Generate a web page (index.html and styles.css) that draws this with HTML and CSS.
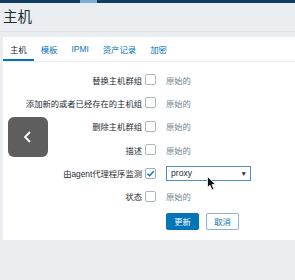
FILE: index.html
```html
<!DOCTYPE html>
<html lang="zh">
<head>
  <meta charset="UTF-8" />
  <title>主机</title>
<link rel="stylesheet" href="styles.css">
</head>
<body>

<div class="topbar"><span class="topbar-mark"></span></div>

<div class="page-title">
  <h1>主机</h1>
</div>

<div class="card">
  <ul class="tabs">
    <li class="active">主机</li>
    <li>模板</li>
    <li>IPMI</li>
    <li>资产记录</li>
    <li>加密</li>
  </ul>

  <div class="form">
    <div class="row">
      <label>替换主机群组</label>
      <span class="check"></span>
      <span class="value">原始的</span>
    </div>
    <div class="row">
      <label>添加新的或者已经存在的主机组</label>
      <span class="check"></span>
      <span class="value">原始的</span>
    </div>
    <div class="row">
      <label>删除主机群组</label>
      <span class="check"></span>
      <span class="value">原始的</span>
    </div>
    <div class="row">
      <label>描述</label>
      <span class="check"></span>
      <span class="value">原始的</span>
    </div>
    <div class="row">
      <label>由agent代理程序监测</label>
      <span class="check checked">
        <svg viewBox="0 0 10 10" width="9" height="9"><path d="M1.5 5.2 L4 7.5 L8.6 2.6" fill="none" stroke="#1f6fb8" stroke-width="1.6"/></svg>
      </span>
      <div class="select">
        <span>proxy</span>
        <span class="arrow">▼</span>
      </div>
    </div>
    <div class="row">
      <label>状态</label>
      <span class="check"></span>
      <span class="value">原始的</span>
    </div>
    <div class="buttons">
      <button class="btn primary">更新</button>
      <button class="btn">取消</button>
    </div>
  </div>
</div>

<div class="back-btn">
  <svg viewBox="0 0 16 16" width="16" height="16"><path d="M10 3 L5 8 L10 13" fill="none" stroke="#fff" stroke-width="1.8"/></svg>
</div>

<svg class="cursor" viewBox="0 0 10 15" width="10" height="15">
  <path d="M0.5 0.5 L0.5 11.5 L3 9.3 L5 14 L7 13.2 L5 8.6 L8.5 8.6 Z" fill="#111" stroke="#fff" stroke-width="0.8"/>
</svg>

</body>
</html>
```

FILE: styles.css
```css
body {
  margin: 0;
  background: #ebeef0;
  font-family: "Liberation Sans", "Noto Sans CJK SC", sans-serif;
  color: #1f2c33;
  position: relative;
  height: 280px;
  overflow: hidden;
}

.topbar {
  height: 3px;
  background: #0d3d63;
  position: relative;
}

.topbar-mark {
  position: absolute;
  left: 80px;
  top: 0;
  width: 17px;
  height: 3px;
  background: #78acd9;
}

.page-title {
  padding: 0 3px;
  height: 28px;
  border-bottom: 1px solid #dde2e5;
  display: flex;
  align-items: center;
}

.page-title h1 {
  margin: 0;
  font-size: 14.5px;
  font-weight: normal;
  color: #1f2c33;
  line-height: 1;
  padding-top: 1px;
}

.card {
  margin: 5px 0 0 3px;
  background: #fff;
  height: 203px;
}

.tabs {
  list-style: none;
  margin: 0;
  padding: 0;
  display: flex;
  height: 24px;
  border-bottom: 1px solid #ebeef0;
  font-size: 8.4px;
}

.tabs li {
  padding: 2px 7px 0;
  color: #0275b8;
  display: flex;
  align-items: center;
  box-sizing: border-box;
  border-bottom: 2px solid transparent;
}

.tabs li.active {
  color: #1f2c33;
  border-bottom-color: #0275b8;
}

.form {
  padding-top: 9.5px;
  display: flex;
  flex-direction: column;
  gap: 7.4px;
  font-size: 8.3px;
}

.row {
  display: flex;
  align-items: center;
  height: 16px;
}

.row label {
  width: 139px;
  text-align: right;
  padding-right: 3px;
  white-space: nowrap;
}

.check {
  width: 11px;
  height: 11px;
  box-sizing: border-box;
  border: 1px solid #acb6bd;
  border-radius: 2px;
  background: #fff;
  margin-right: 10px;
  display: flex;
  align-items: center;
  justify-content: center;
}

.check.checked {
  border-color: #8fb3d4;
}

.value {
  color: #6f838f;
}

.select {
  width: 85px;
  height: 15px;
  box-sizing: border-box;
  border: 1px solid #4f8ec6;
  display: flex;
  align-items: center;
  justify-content: space-between;
  padding: 0 3px 0 4px;
  font-size: 8.6px;
  color: #1f2c33;
}

.select .arrow {
  font-size: 6.5px;
  color: #1f2c33;
}

.buttons {
  display: flex;
  gap: 7px;
  padding-left: 163px;
  margin-top: 1px;
}

.btn {
  width: 33px;
  height: 17px;
  padding: 0;
  font-family: inherit;
  font-size: 8.3px;
  border: 1px solid #8fb3d4;
  border-radius: 2px;
  background: #fff;
  color: #0275b8;
}

.btn.primary {
  background: #0275b8;
  border-color: #0275b8;
  color: #fff;
}

.back-btn {
  position: absolute;
  left: 8px;
  top: 117px;
  width: 40px;
  height: 40px;
  border-radius: 6px;
  background: #5e5e5e;
  display: flex;
  align-items: center;
  justify-content: center;
}

.cursor {
  position: absolute;
  left: 207px;
  top: 176px;
}
```
